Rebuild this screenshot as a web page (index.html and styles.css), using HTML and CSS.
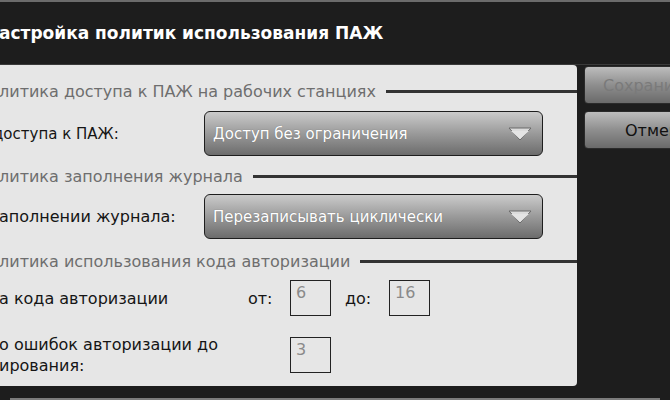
FILE: index.html
```html
<!DOCTYPE html>
<html>
<head>
    <link rel="stylesheet" href="styles.css">
    <title>Настройка политик использования ПАЖ</title>
</head>
<body>
    <div class="window">
        <div class="title-bar">
            <h1 class="title">астройка политик использования ПАЖ</h1>
        </div>
        <div class="window-body">
            <div class="panel">
                <div class="section-title">
                    <span>литика доступа к ПАЖ на рабочих станциях</span>
                </div>
                <div class="field-row">
                    <label class="field-label label-cut">доступа к ПАЖ:</label>
                    <div class="select-box">
                        <span>Доступ без ограничения</span>
                        <svg class="select-arrow" width="24" height="14" viewBox="0 0 24 14">
                            <polygon points="1,1 23,1 12,13" fill="#dcdcdc" stroke="#6a6a6a" stroke-width="1"/>
                            <polygon points="3,4 21,4 12,12" fill="#e4e4e4"/>
                        </svg>
                    </div>
                </div>

                <div class="section-title section-log">
                    <span>литика заполнения журнала</span>
                </div>
                <div class="field-row">
                    <label class="field-label">аполнении журнала:</label>
                    <div class="select-box">
                        <span>Перезаписывать циклически</span>
                        <svg class="select-arrow" width="24" height="14" viewBox="0 0 24 14">
                            <polygon points="1,1 23,1 12,13" fill="#dcdcdc" stroke="#6a6a6a" stroke-width="1"/>
                            <polygon points="3,4 21,4 12,12" fill="#e4e4e4"/>
                        </svg>
                    </div>
                </div>

                <div class="section-title section-code">
                    <span>литика использования кода авторизации</span>
                </div>
                <div class="code-row">
                    <span class="code-label">а кода авторизации</span>
                    <span class="range-label">от:</span>
                    <div class="num-box">6</div>
                    <span class="range-label range-to">до:</span>
                    <div class="num-box">16</div>
                </div>
                <div class="code-row code-row-errors">
                    <span class="code-label">о ошибок авторизации до<br>ирования:</span>
                    <span class="range-label"></span>
                    <div class="num-box">3</div>
                </div>
            </div>
            <div class="actions">
                <button class="action-button" disabled>Сохранить</button>
                <button class="action-button">Отмена</button>
            </div>
        </div>
    </div>
</body>
</html>
```

FILE: styles.css
```css
body {
    margin: 0;
    background-color: #1d1d1d;
    font-family: "DejaVu Sans", Tahoma, sans-serif;
    overflow: hidden;
}

.window {
    width: 670px;
    height: 400px;
    border-top: 2px solid #6b6b6b;
    box-sizing: border-box;
    overflow: hidden;
}

.title-bar {
    height: 63px;
    display: flex;
    align-items: center;
    border-bottom: 1px solid #3a3a3a;
    box-sizing: border-box;
}

.title {
    margin: 0 0 0 -1px;
    font-size: 17px;
    font-weight: bold;
    color: #ffffff;
}

.window-body {
    display: flex;
    height: 322px;
    border-bottom: 11px solid #1d1d1d;
    box-shadow: 0 12px 0 -10px #7c7c7c;
}

.panel {
    flex-shrink: 0;
    width: 577px;
    height: 321px;
    background-color: #e6e6e6;
    border-radius: 0 4px 4px 0;
    padding-top: 16px;
    box-sizing: border-box;
}

.section-title {
    display: flex;
    align-items: center;
    height: 20px;
    font-size: 16px;
    color: #6e6e6e;
    margin-left: -1px;
}

.section-title::after {
    content: "";
    flex: 1;
    height: 3px;
    margin-left: 10px;
    background-color: #333333;
}

.section-log {
    margin-top: 10px;
}

.section-code {
    margin-top: 12px;
}

.field-row {
    display: flex;
    align-items: center;
    margin-top: 10px;
}

.section-log + .field-row {
    margin-top: 8px;
}

.field-label {
    width: 205px;
    font-size: 16px;
    color: #151515;
    margin-left: -1px;
}

.label-cut {
    font-size: 15px;
    text-indent: -6px;
}

.select-box {
    width: 339px;
    height: 45px;
    display: flex;
    align-items: center;
    justify-content: space-between;
    padding: 0 10px 0 8px;
    box-sizing: border-box;
    border: 1px solid #1e1e1e;
    border-radius: 6px;
    background: linear-gradient(#cbcbcb, #9a9a9a 50%, #6c6c6c);
    color: #ffffff;
    font-size: 15px;
    text-shadow: 0 0 1px #666666;
}

.code-row {
    display: flex;
    align-items: center;
    height: 36px;
    margin-top: 9px;
    font-size: 16px;
    color: #151515;
}

.code-row-errors {
    margin-top: 21px;
}

.code-label {
    width: 249px;
    line-height: 21px;
    margin-left: -1px;
}

.range-label {
    width: 42px;
}

.range-to {
    width: 44px;
    margin-left: 14px;
}

.num-box {
    width: 41px;
    height: 36px;
    box-sizing: border-box;
    border: 1px solid #222222;
    padding: 2px 5px;
    font-size: 16px;
    color: #8a8a8a;
}

.actions {
    display: flex;
    flex-direction: column;
    gap: 7px;
    margin-left: 7px;
    padding-top: 1px;
}

.action-button {
    width: 120px;
    height: 38px;
    flex-shrink: 0;
    border: 1px solid #2a2a2a;
    border-radius: 4px;
    background: linear-gradient(#bdbdbd, #8e8e8e 50%, #6a6a6a);
    font-family: "DejaVu Sans", Tahoma, sans-serif;
    font-size: 16px;
    color: #111111;
    text-align: left;
    padding-left: 40px;
}

.action-button:disabled {
    color: #7a7a7a;
    padding-left: 18px;
}
```
